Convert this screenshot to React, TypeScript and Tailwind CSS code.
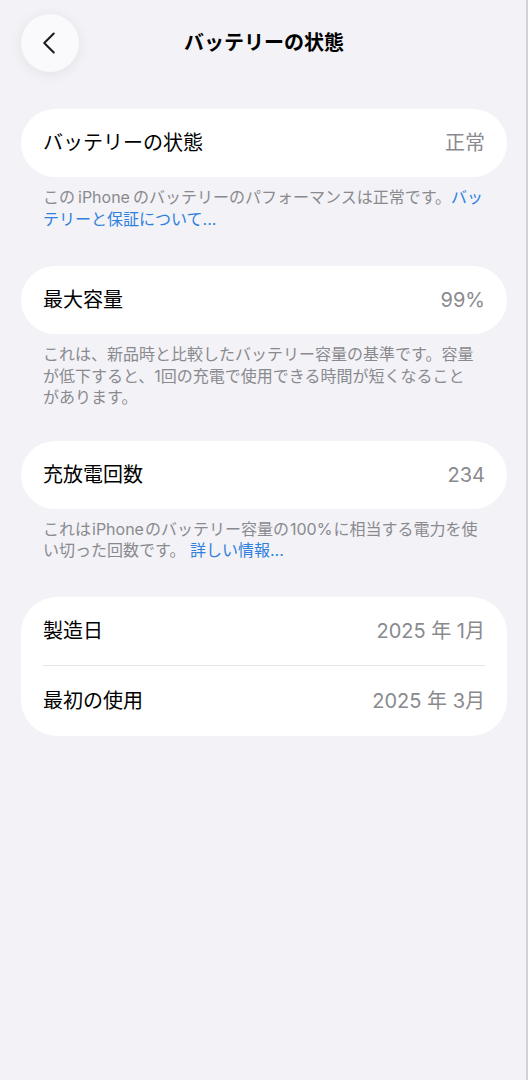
import { ChevronLeft } from "lucide-react";

const font = { fontFamily: '"Inter", "Noto Sans CJK JP", sans-serif' };

function Row({ label, value }: { label: string; value: string }) {
  return (
    <div className="flex h-[68px] items-center justify-between px-[22px]">
      <span className="text-[20px] text-black">{label}</span>
      <span className="text-[20px] text-[#8a8a8e]">{value}</span>
    </div>
  );
}

export default function App() {
  return (
    <div
      className="min-h-[1080px] w-full bg-[#f2f2f7] px-[21px] pt-[14px] shadow-[inset_-2px_0_0_#d2d2d6]"
      style={font}
    >
      <header className="grid grid-cols-[58px_1fr_58px] items-center">
        <button className="flex h-[58px] w-[58px] items-center justify-center rounded-full bg-[#fafafc] shadow-[0_2px_14px_rgba(0,0,0,0.07)]">
          <ChevronLeft className="mr-[3px] h-[38px] w-[38px] text-[#1c1c1e]" strokeWidth={1.3} />
        </button>
        <h1 className="text-center text-[20px] font-bold text-black">バッテリーの状態</h1>
        <div />
      </header>

      <section className="mt-[37px]">
        <div className="rounded-full bg-white">
          <Row label="バッテリーの状態" value="正常" />
        </div>
        <p className="mt-[10px] px-[22px] text-[16px] leading-[21.5px] text-[#8a8a8e]">
          <span className="block whitespace-nowrap">
            この<span className="mx-[3px]">iPhone</span>のバッテリーのパフォーマンスは正常です。
            <span className="text-[#2f7fde]">バッ</span>
          </span>
          <span className="block whitespace-nowrap text-[#2f7fde]">テリーと保証について...</span>
        </p>
      </section>

      <section className="mt-[36px]">
        <div className="rounded-full bg-white">
          <Row label="最大容量" value="99%" />
        </div>
        <p className="mt-[10px] px-[22px] text-[16px] leading-[21.5px] text-[#8a8a8e]">
          <span className="block whitespace-nowrap">これは、新品時と比較したバッテリー容量の基準です。容量</span>
          <span className="block whitespace-nowrap">が低下すると、1回の充電で使用できる時間が短くなること</span>
          <span className="block whitespace-nowrap">があります。</span>
        </p>
      </section>

      <section className="mt-[32px]">
        <div className="rounded-full bg-white">
          <Row label="充放電回数" value="234" />
        </div>
        <p className="mt-[10px] px-[22px] text-[16px] leading-[21.5px] text-[#8a8a8e]">
          <span className="block whitespace-nowrap">
            これは<span className="mx-[1px]">iPhone</span>のバッテリー容量の<span className="mx-[1px]">100%</span>に相当する電力を使
          </span>
          <span className="block whitespace-nowrap">
            い切った回数です。 <span className="text-[#2f7fde]">詳しい情報...</span>
          </span>
        </p>
      </section>

      <section className="mt-[35px] rounded-[36px] bg-white">
        <Row label="製造日" value="2025 年 1月" />
        <div className="mx-[22px] h-px bg-[#e3e3e6]" />
        <div className="flex h-[70px] items-center justify-between px-[22px]">
          <span className="text-[20px] text-black">最初の使用</span>
          <span className="text-[20px] text-[#8a8a8e]">2025 年 3月</span>
        </div>
      </section>
    </div>
  );
}
